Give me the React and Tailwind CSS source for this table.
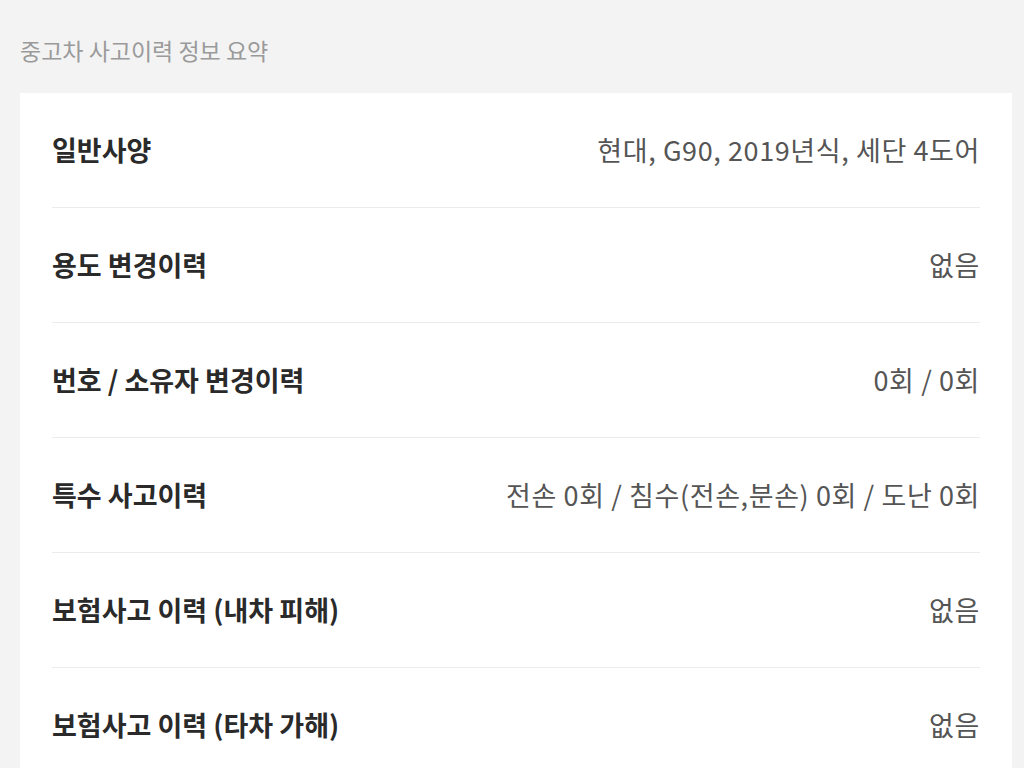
const rows = [
  { label: "일반사양", value: "현대, G90, 2019년식, 세단 4도어" },
  { label: "용도 변경이력", value: "없음" },
  { label: "번호 / 소유자 변경이력", value: "0회 / 0회" },
  { label: "특수 사고이력", value: "전손 0회 / 침수(전손,분손) 0회 / 도난 0회" },
  { label: "보험사고 이력 (내차 피해)", value: "없음" },
  { label: "보험사고 이력 (타차 가해)", value: "없음" },
];

export default function App() {
  return (
    <div
      className="min-h-screen bg-[#f3f3f3] pl-5 pr-3 pt-[33px]"
      style={{ fontFamily: '"Noto Sans CJK KR", "Noto Sans", sans-serif' }}
    >
      <h1 className="text-[23px] leading-[34px] text-[#9a9a9a] mb-[26px]">
        중고차 사고이력 정보 요약
      </h1>
      <div className="bg-white px-8">
        {rows.map((row, i) => (
          <div
            key={i}
            className={`flex items-center justify-between h-[115px] ${
              i < rows.length - 1 ? "border-b border-[#ececec]" : ""
            }`}
          >
            <span className="text-[27px] font-bold text-[#2a2a2a]">
              {row.label}
            </span>
            <span className="text-[27px] text-[#555] tracking-[0.6px]">
              {row.value}
            </span>
          </div>
        ))}
      </div>
    </div>
  );
}
